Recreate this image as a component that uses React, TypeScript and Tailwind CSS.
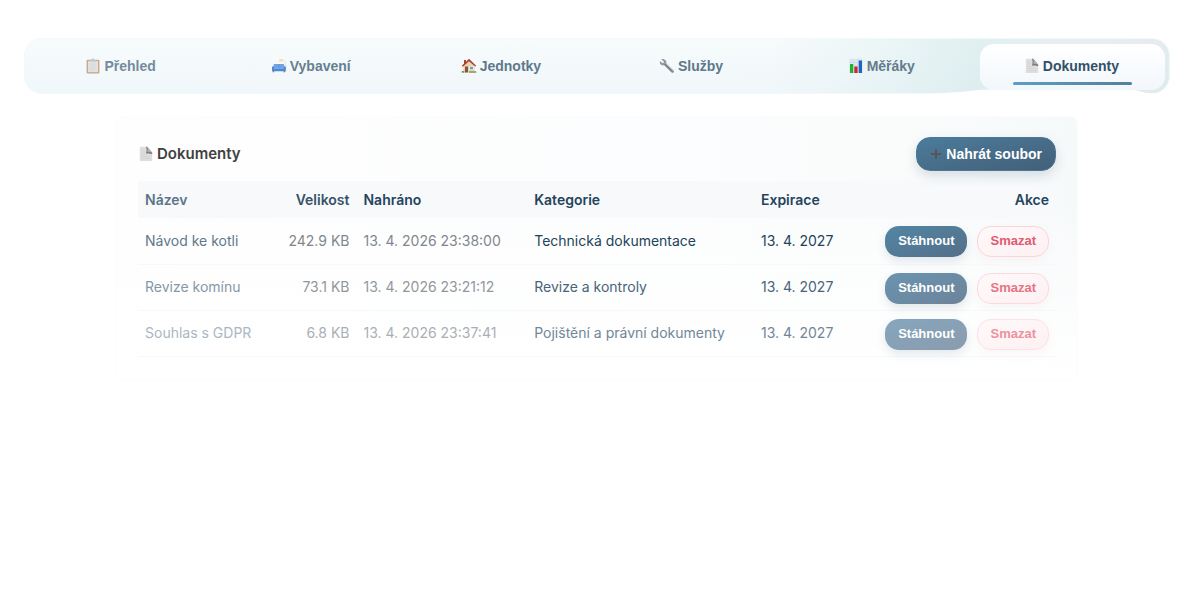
import type { ReactNode } from 'react';

function ClipboardIcon() {
  return (
    <svg viewBox="0 0 16 16" className="size-4 shrink-0 opacity-80" aria-hidden="true">
      <rect x="1.6" y="1.8" width="12.8" height="13.6" rx="1" fill="#c08f60" />
      <rect x="2.9" y="3" width="10.2" height="11.2" fill="#dcdddf" />
      <path d="M4.4 3.8V2.2h2C6.5 1 7.1.6 8 .6s1.500.4 1.600 1.600h2v1.600z" fill="#b9bec3" />
      <path d="M4.500 6h7M4.500 8h7M4.500 10h7M4.500 12h5" stroke="#cbccd0" strokeWidth=".6" />
    </svg>
  );
}

function CouchIcon() {
  return (
    <svg viewBox="0 0 16 16" className="size-4 shrink-0" aria-hidden="true">
      <path d="M10.500 1.600c3 .2 4.300 2.300 4.300 5V14" fill="none" stroke="#dfe0dc" strokeWidth=".8" />
      <path d="M7.800 3.400 8.600 1h3l.9 2.400z" fill="#fbe3a0" />
      <path d="M2.600 6.800c0-.6.400-.9 1-.9h8.600c.6 0 1 .3 1 .9v4.200H2.600z" fill="#6fa3e3" />
      <path d="M7.900 6v4" stroke="#4f86cf" strokeWidth=".5" />
      <path d="M1 9c0-.9 2-.9 2 0v1.300h9.800V9c0-.9 2-.9 2 0v4.200H1z" fill="#5088d6" />
      <path d="M3 10.300h9.800" stroke="#8ab7ed" strokeWidth=".7" />
      <path d="M1.800 13.200h1.400v1H1.800zM12.600 13.200H14v1h-1.400z" fill="#765f55" />
    </svg>
  );
}

function HouseIcon() {
  return (
    <svg viewBox="0 0 16 16" className="size-4 shrink-0" aria-hidden="true">
      <path d="M3 2h2v4H3z" fill="#a04a3c" />
      <path d="M2.400 7.400 8 2.300l5.600 5.100v7H2.400z" fill="#ecd3ab" />
      <path d="M.8 7.800 7.600 1.200c.3-.3.600-.3.900 0l6.700 6.600-1 .8L8 3.200 1.800 8.700z" fill="#ad3c31" />
      <path d="M4 8.500h3v6H4z" fill="#865541" />
      <path d="M8.500 8.300h4v3.500h-4z" fill="#fff" />
      <path d="M9 8.800h3v2.500H9z" fill="#58a3d2" />
      <path d="M.7 13h2.600v1.700H.7zM8 13.200h7.300v1.500H8z" fill="#809b57" />
    </svg>
  );
}

function WrenchIcon() {
  return (
    <svg viewBox="0 0 16 16" className="size-4 shrink-0" aria-hidden="true">
      <path
        d="M2.200 1.200 4.800 3.600 4.600 5 3.300 5.100 1 3c-.5 1.700.2 3.400 1.600 4.100.9.400 1.700.3 2.500.1l7.400 7.300c1.500 1.200 3.200-.5 2.100-2L7.300 5.400c.3-1 .2-2-.5-2.900C5.700 1.100 4 .6 2.200 1.200z"
        fill="#92989f"
      />
      <path d="m5.800 6.100 7.600 7.600" stroke="#62676f" strokeWidth=".9" />
      <path d="m6.500 5.300 7.800 7.800" stroke="#c3c6ca" strokeWidth=".6" />
    </svg>
  );
}

function ChartIcon() {
  return (
    <svg viewBox="0 0 16 16" className="size-4 shrink-0" aria-hidden="true">
      <rect x="1.300" y=".8" width="13.400" height="14.200" fill="#dce7ef" />
      <path d="M1.300 4.500h13.400M1.300 8h13.400M1.300 11.500h13.400M5.500.8V15M10 .8V15" stroke="#c3d3df" strokeWidth=".4" />
      <rect x="2" y="6" width="3.200" height="9" fill="#1eb52b" />
      <rect x="6.300" y="8.500" width="3.300" height="6.500" fill="#cf2530" />
      <rect x="10.700" y="2.500" width="3.300" height="12.500" fill="#1f63c4" />
    </svg>
  );
}

function PageIcon() {
  return (
    <svg viewBox="0 0 16 16" className="size-4 shrink-0" aria-hidden="true">
      <path d="M1.800.8h7.400l5 6V15H1.800z" fill="#dedede" />
      <path d="M8 .8h1.200l5 6v1.500c-2-1-4.200-1.100-6.200-.6C8.700 5.300 8.900 3 8 .8z" fill="#7d7d7d" />
      <path d="M9.200.8c.8 1.700.7 3 .1 5.200 1.800-.4 3.300-.2 4.900.8z" fill="#b4b4b4" />
      <path d="M3.300 4h3.400M3.300 6h3.400M3.300 8.500h4M3.300 10.500h9M3.300 12.500h9" stroke="#cacaca" strokeWidth=".5" />
    </svg>
  );
}

const tabs: { label: string; icon: ReactNode; color: string }[] = [
  { label: 'Přehled', icon: <ClipboardIcon />, color: 'text-[#758b9b]' },
  { label: 'Vybavení', icon: <CouchIcon />, color: 'text-[#667f91]' },
  { label: 'Jednotky', icon: <HouseIcon />, color: 'text-[#5f788b]' },
  { label: 'Služby', icon: <WrenchIcon />, color: 'text-[#5f788b]' },
  { label: 'Měřáky', icon: <ChartIcon />, color: 'text-[#647b8d]' },
];

const files = [
  {
    name: 'Návod ke kotli',
    size: '242.9 KB',
    uploaded: '13. 4. 2026 23:38:00',
    category: 'Technická dokumentace',
    nameColor: 'text-[#5f788c]',
    mutedColor: 'text-[#81878d]',
    color: 'text-[#22435b]',
    download: 'from-[#5286a3] to-[#536f89]',
    remove: 'text-[#e05b70] border-[#fbd3d8]',
  },
  {
    name: 'Revize komínu',
    size: '73.1 KB',
    uploaded: '13. 4. 2026 23:21:12',
    category: 'Revize a kontroly',
    nameColor: 'text-[#8498a8]',
    mutedColor: 'text-[#92979c]',
    color: 'text-[#49647a]',
    download: 'from-[#6a94b0] to-[#6d8399]',
    remove: 'text-[#e67484] border-[#fbd9de]',
  },
  {
    name: 'Souhlas s GDPR',
    size: '6.8 KB',
    uploaded: '13. 4. 2026 23:37:41',
    category: 'Pojištění a právní dokumenty',
    nameColor: 'text-[#a9b7c2]',
    mutedColor: 'text-[#abafb4]',
    color: 'text-[#718799]',
    download: 'from-[#85a6bd] to-[#8a9bae]',
    remove: 'text-[#ec919e] border-[#fce2e5]',
  },
];

export default function App() {
  return (
    <div className="bg-white pt-[38px] font-[Inter,sans-serif] text-sm">
      <nav className="relative ml-6 mr-[30px] rounded-[18px] border border-[#f1f9fa] bg-[linear-gradient(to_right,#f3fafb_0%,#f3f9fa_65%,#e2f1f2_76%,#d3e9e9_83%,#dde6ea_92%,#dae3e8_100%)] font-['Liberation_Sans',Arial,sans-serif] font-bold">
        <div className="flex gap-[5px] rounded-[17px] bg-linear-to-b from-white/30 to-[#edf4fa]/40 px-1 pb-[3px] pt-[5px]">
          {tabs.map((tab) => (
            <button key={tab.label} type="button" className={`flex h-[46px] flex-1 items-center justify-center gap-[3px] pb-0.5 pr-0.5 ${tab.color}`}>
              {tab.icon}
              {tab.label}
            </button>
          ))}
          <button type="button" aria-current="page" className="relative z-10 flex h-[46px] flex-1 items-center justify-center gap-[3px] rounded-[14px] bg-linear-to-b from-white to-[#f2f7fb] pb-0.5 pr-0.5 text-[#315169]">
            <PageIcon />
            Dokumenty
            <span className="absolute inset-x-[33px] bottom-[5px] h-[3px] rounded-full bg-linear-to-r from-[#5b9fc4] to-[#527f9d]" />
          </button>
        </div>
        <svg viewBox="0 0 250 8" className="absolute -bottom-[4px] right-0 z-0 h-2 w-[250px]" aria-hidden="true">
          <path d="M0 5C30 4.500 45 2.500 62 .8C80 0 110 0 200 0C222 0 222 4.500 235 4.500V8H0z" fill="#fff" />
        </svg>
      </nav>

      <main className="ml-[116px] mr-[122px] mt-[22px] rounded-lg border border-[#fbfdfd] bg-[linear-gradient(to_bottom,transparent_30%,#ffffff_100%),linear-gradient(to_right,#fefefe,#fcfdfe_60%,#fafcfc_80%,#f6f9fa)] px-[21px] pb-[22px] pt-5">
        <header className="mb-[10px] flex h-[34px] items-center justify-between">
          <h1 className="flex items-center gap-[3px] text-[15px] font-semibold text-[#414141]">
            <PageIcon />
            Dokumenty
          </h1>
          <button type="button" className="flex h-[34px] items-center gap-1 rounded-[14px] border border-[#4b7894] bg-linear-to-br from-[#4b7c9c] to-[#435f78] px-[13px] font-['Liberation_Sans',Arial,sans-serif] font-bold text-white shadow-[0_5px_12px_rgba(45,75,105,0.17)]">
            <svg viewBox="0 0 12 12" className="size-3" aria-hidden="true">
              <path d="M6 1v10M1 6h10" stroke="#56565a" strokeWidth="2" />
            </svg>
            Nahrát soubor
          </button>
        </header>

        <table className="w-full table-fixed border-collapse text-left">
          <colgroup>
            <col className="w-[15%]" />
            <col className="w-[8.800%]" />
            <col className="w-[18.600%]" />
            <col className="w-[24.700%]" />
            <col className="w-[12.500%]" />
            <col />
          </colgroup>
          <thead className="bg-[#f8f9fb] text-[#24445b]">
            <tr className="h-[37px]">
              <th className="px-[7px] font-semibold text-[#5c758a]">Název</th>
              <th className="px-[7px] text-right font-semibold text-[#365269]">Velikost</th>
              <th className="px-[7px] font-semibold">Nahráno</th>
              <th className="px-[7px] font-semibold">Kategorie</th>
              <th className="px-[7px] font-semibold">Expirace</th>
              <th className="px-[7px] text-right font-semibold">Akce</th>
            </tr>
          </thead>
          <tbody>
            {files.map((file) => (
              <tr key={file.name} className="h-[46px] whitespace-nowrap border-b border-[#f6f8f9]">
                <td className={`px-[7px] ${file.nameColor}`}>{file.name}</td>
                <td className={`px-[7px] text-right ${file.mutedColor}`}>{file.size}</td>
                <td className={`px-[7px] ${file.mutedColor}`}>{file.uploaded}</td>
                <td className={`px-[7px] ${file.color}`}>{file.category}</td>
                <td className={`px-[7px] ${file.color}`}>13. 4. 2027</td>
                <td className="px-[7px] pt-0.5">
                  <div className="flex justify-end gap-[10px] font-['Liberation_Sans',Arial,sans-serif] text-[13px] font-bold">
                    <button type="button" className={`h-[31px] rounded-[14px] bg-linear-to-br px-[13px] text-white shadow-[0_4px_10px_rgba(45,75,105,0.13)] ${file.download}`}>
                      Stáhnout
                    </button>
                    <button type="button" className={`h-[31px] rounded-[14px] border bg-linear-to-br from-[#fff9f9] to-[#fdf0f2] px-3 shadow-[0_4px_10px_rgba(220,90,110,0.05)] ${file.remove}`}>
                      Smazat
                    </button>
                  </div>
                </td>
              </tr>
            ))}
          </tbody>
        </table>
      </main>
    </div>
  );
}
